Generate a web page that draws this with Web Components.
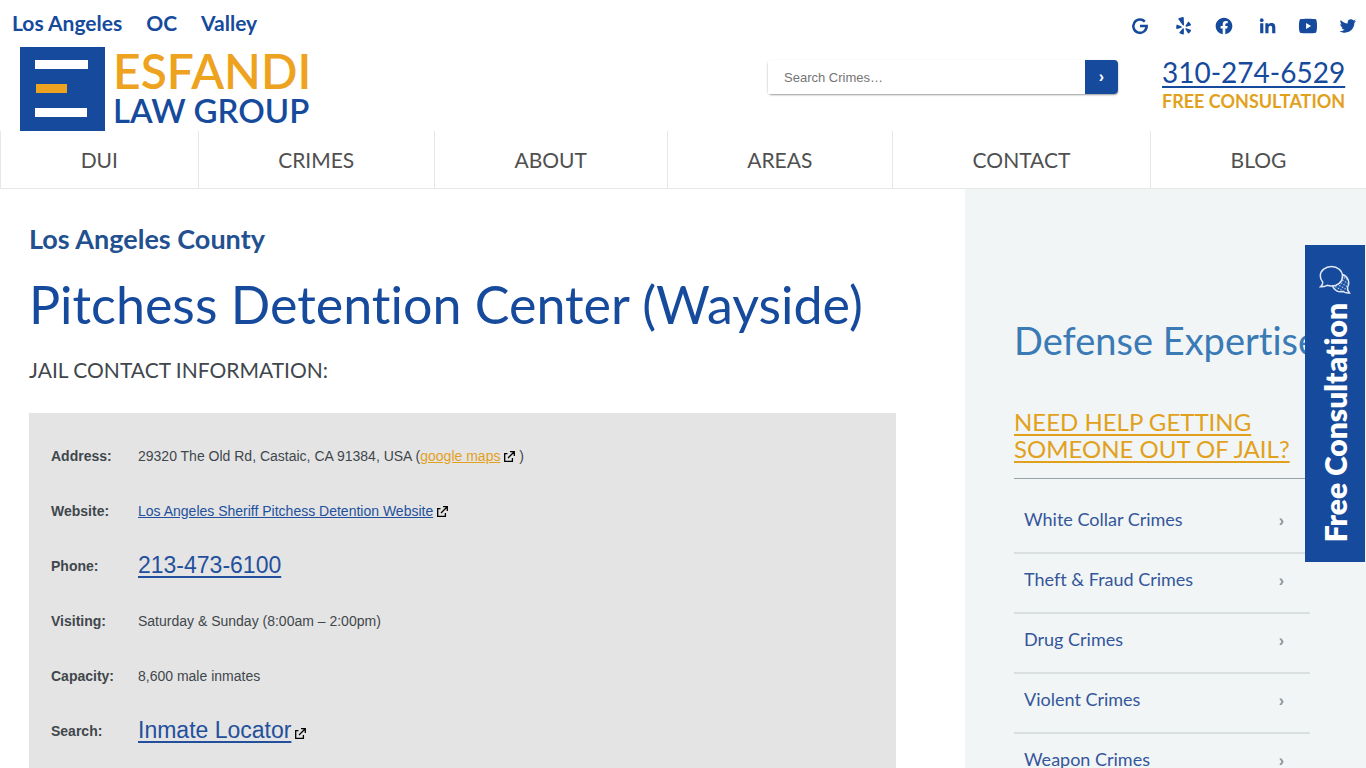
<!DOCTYPE html>
<html lang="en">
<head>
<meta charset="UTF-8">
<meta name="viewport" content="width=device-width, initial-scale=1.0">
<title>Pitchess Detention Center (Wayside)</title>
<style>
    :root {
        --blue: #164a9c;
        --gold: #e2a11c;
        --slate: #3f474c;
    }
    html {
        scrollbar-width: none;
    }
    body {
        margin: 0;
        background: #fff;
        color: var(--slate);
        font-family: Lato, "Open Sans", sans-serif;
        font-variant-ligatures: none;
    }
    .columns {
        display: grid;
        grid-template-columns: minmax(0, 1fr) 401px;
    }
</style>
</head>
<body>
    <site-header></site-header>
    <site-nav></site-nav>
    <div class="columns">
        <jail-info>
            <span slot="county">Los Angeles County</span>
            <span slot="title">Pitchess Detention Center (Wayside)</span>
        </jail-info>
        <crime-sidebar></crime-sidebar>
    </div>
    <consult-tab>Free Consultation</consult-tab>

<script>
class SocialIcons extends HTMLElement {
    connectedCallback() {
        this.attachShadow({ mode: 'open' });
        this.shadowRoot.innerHTML = `
            <style>
                :host {
                    display: flex;
                    gap: 20px;
                }

                a {
                    color: var(--blue);
                    height: 20px;
                }

                .wide {
                    margin-right: 4px;
                }

                svg {
                    display: block;
                    width: 20px;
                    height: 20px;
                    fill: currentColor;
                }
            </style>
            <a class="wide" href="#" aria-label="Google"><svg viewBox="0 0 24 24"><path fill="none" stroke="currentColor" stroke-width="3" d="M17.800 6.700a8 8 0 1 0 2.200 5.300v-.1H12"/></svg></a>
            <a href="#" aria-label="Yelp"><svg viewBox="0 0 24 24"><path d="M5.6 2.8c1.7-.9 3.500-1.500 5.200-1.600.6 0 .9.300.9.900l.3 8.300c0 1.100-1.100 1.400-1.700.500L5.300 4c-.3-.5-.2-1 .3-1.200zM4 10.400l4.700 2c.9.400.8 1.600-.1 1.800l-4.800 1.300c-.6.200-1-.2-1.100-.7-.1-1.300 0-2.600.3-3.800.1-.6.500-.8 1-.6zM10.200 15.200c.6-.8 1.700-.4 1.700.6l-.1 5.700c0 .6-.5.900-1 .800-1.500-.3-2.800-.9-4-1.700-.5-.3-.5-.8-.2-1.200zM14.900 14.800l5 1.700c.6.200.8.600.5 1.100-.6 1.200-1.500 2.300-2.600 3.100-.4.400-.9.300-1.200-.2l-2.700-4.300c-.5-.9.100-1.700 1-1.400zM14 11.500l2.800-4.200c.3-.5.800-.5 1.200-.1 1 .9 1.900 2 2.400 3.200.2.500 0 .9-.5 1.100l-4.800 1.400c-1 .2-1.600-.6-1.100-1.400z"/></svg></a>
            <a class="wide" href="#" aria-label="Facebook"><svg viewBox="0 0 24 24"><path d="M12.001 2.002c-5.522 0-9.999 4.477-9.999 9.999 0 4.99 3.656 9.126 8.437 9.879v-6.988h-2.54v-2.891h2.54V9.798c0-2.508 1.493-3.891 3.776-3.891 1.094 0 2.24.195 2.24.195v2.459h-1.264c-1.24 0-1.628.772-1.628 1.563v1.875h2.771l-.443 2.891h-2.328v6.988C18.344 21.129 22 16.992 22 12.001c0-5.522-4.477-9.999-9.999-9.999z"/></svg></a>
            <a href="#" aria-label="LinkedIn"><svg viewBox="0 0 24 24"><circle cx="4.500" cy="5" r="2.200"/><path d="M2.600 8.700h3.800v12H2.600zM8.800 8.700h3.600v1.700c.6-1.200 2-2 3.700-2 3.700 0 4.700 2.100 4.700 5.700v6.600H17v-5.900c0-1.700-.3-3.200-2.100-3.200-1.700 0-2.300 1.300-2.300 3.200v5.900H8.800z"/></svg></a>
            <a href="#" aria-label="YouTube"><svg viewBox="0 0 24 24"><path fill-rule="evenodd" d="M2.500 3.900C5.500 3 18.500 3 21.500 3.900c1.800 2 1.800 14.200 0 16.200-3 .9-16 .9-19 0-1.800-2-1.800-14.200 0-16.200zM9.700 8.300v7.400l6-3.700z"/></svg></a>
            <a href="#" aria-label="Twitter"><svg viewBox="0 0 24 24"><path d="M19.633 7.997c.013.175.013.349.013.523 0 5.325-4.053 11.461-11.46 11.461-2.282 0-4.402-.661-6.186-1.809.324.037.636.05.973.05a8.07 8.07 0 0 0 5.001-1.721 4.036 4.036 0 0 1-3.767-2.793c.249.037.499.062.761.062.361 0 .724-.05 1.061-.137a4.027 4.027 0 0 1-3.23-3.953v-.05c.537.299 1.16.486 1.82.511a4.022 4.022 0 0 1-1.796-3.354c0-.748.199-1.434.548-2.032a11.457 11.457 0 0 0 8.306 4.215c-.062-.3-.1-.611-.1-.923a4.026 4.026 0 0 1 4.028-4.028c1.16 0 2.207.486 2.943 1.272a7.957 7.957 0 0 0 2.556-.973 4.02 4.02 0 0 1-1.771 2.22 8.073 8.073 0 0 0 2.319-.624 8.645 8.645 0 0 1-2.019 2.083z"/></svg></a>
        `;
    }
}

class SiteLogo extends HTMLElement {
    connectedCallback() {
        this.attachShadow({ mode: 'open' });
        this.shadowRoot.innerHTML = `
            <style>
                :host {
                    display: block;
                }

                a {
                    display: flex;
                    gap: 8px;
                    text-decoration: none;
                    font-weight: 600;
                }

                svg {
                    width: 85px;
                    height: 84px;
                    flex: none;
                }

                .words {
                    display: flex;
                    flex-direction: column;
                    white-space: nowrap;
                }

                .name {
                    color: #eea320;
                    font-size: 48px;
                    line-height: 48px;
                }

                .group {
                    color: var(--blue);
                    font-size: 33px;
                    line-height: 31px;
                }
            </style>
            <a href="#">
                <svg viewBox="0 0 85 84" aria-hidden="true">
                    <path fill="#164a9c" d="M0 0h85v84H0z"/>
                    <path fill="#fff" d="M15 13h53v9H15zM15 61h52v9H15z"/>
                    <path fill="#eea320" d="M16 37h31v9H16z"/>
                </svg>
                <span class="words">
                    <span class="name">ESFANDI</span>
                    <span class="group">LAW GROUP</span>
                </span>
            </a>
        `;
    }
}

class SearchBox extends HTMLElement {
    connectedCallback() {
        this.attachShadow({ mode: 'open' });
        this.shadowRoot.innerHTML = `
            <style>
                :host {
                    display: block;
                }

                form {
                    display: flex;
                    height: 34px;
                    border-radius: 4px;
                    box-shadow: 0 1px 2px rgba(0, 0, 0, 0.4);
                }

                input {
                    box-sizing: border-box;
                    flex: 1;
                    min-width: 0;
                    padding: 0 16px;
                    border: 0;
                    outline: 0;
                    background: #fff;
                    font: 13px "Liberation Sans", sans-serif;
                }

                input::placeholder {
                    color: #757575;
                }

                button {
                    width: 33px;
                    padding: 0;
                    border: 0;
                    border-radius: 0 4px 4px 0;
                    background: var(--blue);
                    color: #fff;
                    font: 700 16px "Liberation Sans", sans-serif;
                }
            </style>
            <form role="search">
                <input type="text" placeholder="Search Crimes…" aria-label="Search Crimes">
                <button type="button" aria-label="Search">›</button>
            </form>
        `;
    }
}

class SiteHeader extends HTMLElement {
    connectedCallback() {
        this.attachShadow({ mode: 'open' });
        this.shadowRoot.innerHTML = `
            <style>
                :host {
                    display: block;
                }

                .top {
                    display: flex;
                    justify-content: space-between;
                    align-items: center;
                    height: 47px;
                    padding: 0 8px 0 12px;
                }

                .cities {
                    display: flex;
                    gap: 24px;
                    font-size: 21px;
                    line-height: 24px;
                    padding-bottom: 2px;
                    font-weight: 700;
                }

                .cities a {
                    color: var(--blue);
                    text-decoration: none;
                }

                social-icons {
                    padding-top: 4px;
                }

                .main {
                    display: flex;
                    align-items: flex-start;
                    padding: 0 20px;
                    height: 84px;
                }

                search-box {
                    width: 350px;
                    margin: 13px 44px 0 auto;
                }

                .call {
                    width: 184px;
                    padding-top: 7px;
                    white-space: nowrap;
                }

                .call a {
                    display: block;
                    color: var(--blue);
                    font-size: 28px;
                    line-height: 36px;
                    text-underline-offset: 3px;
                    text-decoration-thickness: 2px;
                }

                .call span {
                    display: block;
                    color: var(--gold);
                    font-size: 18px;
                    line-height: 22px;
                    font-weight: 700;
                }
            </style>
            <header>
                <div class="top">
                    <div class="cities">
                        <a href="#">Los Angeles</a>
                        <a href="#">OC</a>
                        <a href="#">Valley</a>
                    </div>
                    <social-icons></social-icons>
                </div>
                <div class="main">
                    <site-logo></site-logo>
                    <search-box></search-box>
                    <div class="call">
                        <a href="tel:310-274-6529">310-274-6529</a>
                        <span>FREE CONSULTATION</span>
                    </div>
                </div>
            </header>
        `;
    }
}

class SiteNav extends HTMLElement {
    connectedCallback() {
        const items = ['DUI', 'CRIMES', 'ABOUT', 'AREAS', 'CONTACT', 'BLOG'];
        this.attachShadow({ mode: 'open' });
        this.shadowRoot.innerHTML = `
            <style>
                :host {
                    display: block;
                    border-bottom: 1px solid #e7e7e7;
                }

                nav {
                    display: flex;
                }

                a {
                    flex: 1 1 auto;
                    border-left: 1px solid #e7e7e7;
                    color: #505050;
                    font-size: 21px;
                    line-height: 57px;
                    text-align: center;
                    text-decoration: none;
                }
            </style>
            <nav>${items.map(item => `<a href="#">${item}</a>`).join('')}</nav>
        `;
    }
}

class ExternalIcon extends HTMLElement {
    connectedCallback() {
        this.attachShadow({ mode: 'open' });
        this.shadowRoot.innerHTML = `
            <style>
                :host {
                    display: inline-block;
                }

                svg {
                    display: block;
                    width: 11px;
                    height: 11px;
                    fill: none;
                    stroke: #000;
                    stroke-width: 1.3;
                }
            </style>
            <svg viewBox="0 0 11 11" aria-hidden="true"><path d="M3.500 2.600H.7v7.700h7.700V7M6 .7h4.300V5M10 1L4 7"/></svg>
        `;
    }
}

class JailInfo extends HTMLElement {
    connectedCallback() {
        this.attachShadow({ mode: 'open' });
        this.shadowRoot.innerHTML = `
            <style>
                :host {
                    display: block;
                    padding: 32px 69px 0 29px;
                }

                h3, h1, h2 {
                    margin: 0;
                    font-weight: 400;
                }

                h3 {
                    color: #23508f;
                    font-size: 27px;
                    line-height: 36px;
                    font-weight: 700;
                }

                h1 {
                    margin-top: 15px;
                    color: var(--blue);
                    font-size: 52px;
                    line-height: 64px;
                }

                h2 {
                    margin-top: 20px;
                    font-size: 21px;
                    line-height: 28px;
                }

                .card {
                    margin-top: 29px;
                    padding: 15px 22px;
                    background: #e4e4e4;
                    font: 14px "Liberation Sans", Arial, sans-serif;
                }

                table {
                    border-collapse: collapse;
                    width: 100%;
                }

                th, td {
                    height: 55px;
                    padding: 0;
                    text-align: left;
                }

                th {
                    width: 87px;
                }

                a {
                    color: #23509c;
                }

                a.gold {
                    color: var(--gold);
                }

                a.big {
                    font-size: 23px;
                    text-underline-offset: 3px;
                    text-decoration-thickness: 2px;
                }

                external-icon {
                    vertical-align: -1px;
                }
            </style>
            <main>
                <h3><slot name="county"></slot></h3>
                <h1><slot name="title"></slot></h1>
                <h2>JAIL CONTACT INFORMATION:</h2>
                <div class="card">
                    <table>
                        <tr><th scope="row">Address:</th><td>29320 The Old Rd, Castaic, CA 91384, USA (<a class="gold" href="#">google maps</a> <external-icon></external-icon> )</td></tr>
                        <tr><th scope="row">Website:</th><td><a href="#">Los Angeles Sheriff Pitchess Detention Website</a> <external-icon></external-icon></td></tr>
                        <tr><th scope="row">Phone:</th><td><a class="big" href="tel:213-473-6100">213-473-6100</a></td></tr>
                        <tr><th scope="row">Visiting:</th><td>Saturday &amp; Sunday (8:00am – 2:00pm)</td></tr>
                        <tr><th scope="row">Capacity:</th><td>8,600 male inmates</td></tr>
                        <tr><th scope="row">Search:</th><td><a class="big" href="#">Inmate Locator</a> <external-icon></external-icon></td></tr>
                    </table>
                </div>
            </main>
        `;
    }
}

class CrimeSidebar extends HTMLElement {
    connectedCallback() {
        const crimes = ['White Collar Crimes', 'Theft &amp; Fraud Crimes', 'Drug Crimes', 'Violent Crimes', 'Weapon Crimes'];
        this.attachShadow({ mode: 'open' });
        this.shadowRoot.innerHTML = `
            <style>
                :host {
                    display: block;
                    padding: 126px 56px 0 49px;
                    background: #f1f5f6;
                }

                h2, h3 {
                    margin: 0;
                    font-weight: 400;
                }

                h2 {
                    color: #3a7ab5;
                    font-size: 38px;
                    line-height: 50px;
                    white-space: nowrap;
                }

                h3 {
                    margin-top: 43px;
                    padding-bottom: 16px;
                    border-bottom: 1px solid #9aa3a8;
                    font-size: 24px;
                    line-height: 27px;
                }

                h3 a {
                    color: var(--gold);
                    text-underline-offset: 3px;
                    text-decoration-thickness: 2px;
                }

                ul {
                    margin: 15px 0 0;
                    padding: 0;
                    list-style: none;
                }

                li {
                    border-bottom: 2px solid #dadfe1;
                }

                li a {
                    display: flex;
                    justify-content: space-between;
                    padding: 0 26px 8px 10px;
                    color: #34569a;
                    font-size: 18px;
                    line-height: 50px;
                    text-decoration: none;
                }

                i {
                    color: #8d9294;
                    font: 700 16px/54px "Liberation Sans", sans-serif;
                    height: 50px;
                }
            </style>
            <aside>
                <h2>Defense Expertise</h2>
                <h3><a href="#">NEED HELP GETTING SOMEONE OUT OF JAIL?</a></h3>
                <ul>${crimes.map(crime => `<li><a href="#">${crime}<i>›</i></a></li>`).join('')}</ul>
            </aside>
        `;
    }
}

class ConsultTab extends HTMLElement {
    connectedCallback() {
        this.attachShadow({ mode: 'open' });
        this.shadowRoot.innerHTML = `
            <style>
                :host {
                    display: block;
                    position: fixed;
                    top: 245px;
                    right: 1px;
                }

                a {
                    display: flex;
                    flex-direction: column;
                    align-items: center;
                    gap: 6px;
                    box-sizing: border-box;
                    width: 60px;
                    padding: 20px 0;
                    background: var(--blue);
                    color: #fff;
                    font-size: 30px;
                    line-height: 40px;
                    font-weight: 800;
                    text-decoration: none;
                }

                svg {
                    width: 32px;
                    height: 32px;
                    fill: none;
                    stroke: #dfe9f8;
                    stroke-width: 1.5;
                }

                span {
                    writing-mode: vertical-rl;
                    transform: rotate(180deg);
                    white-space: nowrap;
                }
            </style>
            <a href="#">
                <svg viewBox="0 0 32 32" aria-hidden="true">
                    <defs>
                        <pattern id="dots" width="3" height="3" patternUnits="userSpaceOnUse" patternTransform="rotate(30)">
                            <circle cx="1.500" cy="1.500" r="0.800" fill="#dfe9f8" stroke="none"/>
                        </pattern>
                    </defs>
                    <path fill="url(#dots)" d="M23.500 9.500c5 1.500 8 7.500 5 13 0 2 .5 4 2 5.500-2.500.3-4.500 0-6.500-1.500-4.500 1-9-1-10.500-5.500 6-.5 10-5 10-11.500z"/>
                    <path fill="#164a9c" d="M12.500 1.500c6 0 11 4 11 9.700s-5 9.800-11 9.800c-1.600 0-3-.2-4.300-.7-2 1-4.200 1.700-6.700 1.500 1.700-1.200 2.300-2.800 2.300-4.500C2.300 15.500 1.300 13.300 1.300 11c0-5.500 5.200-9.500 11.200-9.500z"/>
                </svg>
                <span><slot></slot></span>
            </a>
        `;
    }
}

customElements.define('social-icons', SocialIcons);
customElements.define('site-logo', SiteLogo);
customElements.define('search-box', SearchBox);
customElements.define('site-header', SiteHeader);
customElements.define('site-nav', SiteNav);
customElements.define('external-icon', ExternalIcon);
customElements.define('jail-info', JailInfo);
customElements.define('crime-sidebar', CrimeSidebar);
customElements.define('consult-tab', ConsultTab);
</script>
</body>
</html>
